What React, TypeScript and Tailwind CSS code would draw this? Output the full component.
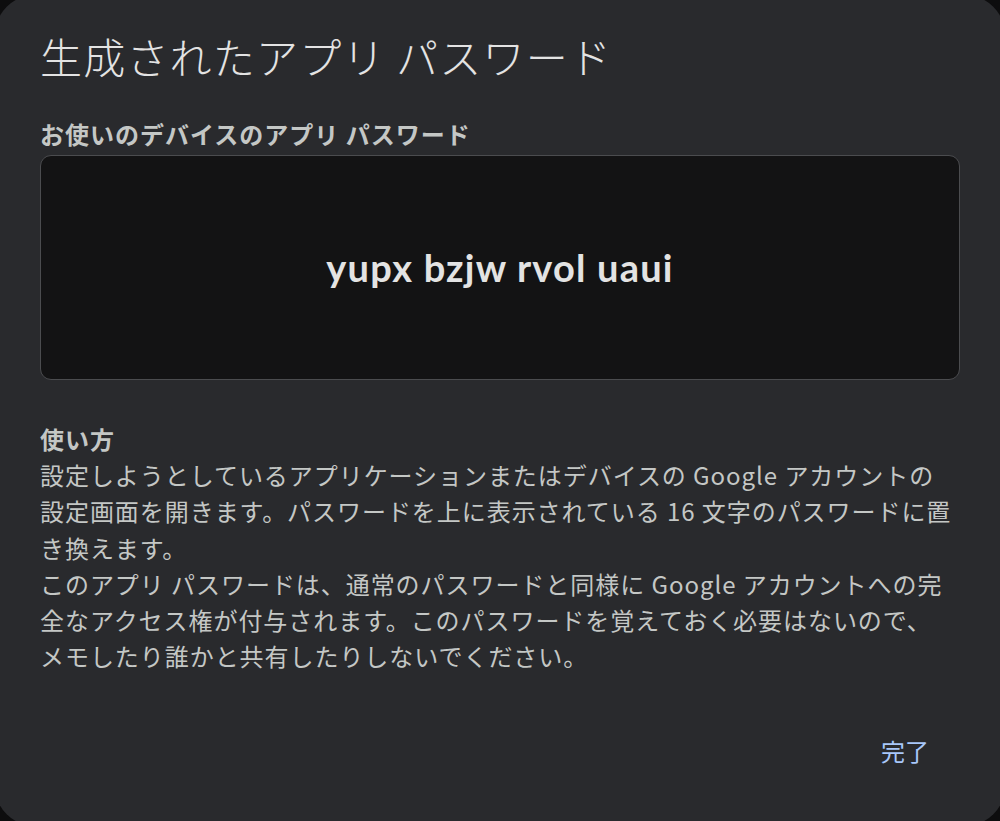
const jp = { fontFamily: '"Noto Sans CJK JP", "Noto Sans", sans-serif' };

const App = () => {
  return (
    <div className="w-[1000px] h-[821px] overflow-hidden bg-[#0d0d0e]">
      {/* dialog is a bit bigger than the window, so only part of its corners shows */}
      <div
        className="-m-[5px] w-[1010px] h-[831px] rounded-[40px] bg-[#292a2d] flex flex-col pl-[45px] pr-[45px] pt-[29px] text-[#c4c7c5]"
        style={jp}
      >
        <h1 className="text-[42px] leading-[64px] font-light text-[#e3e3e3] tracking-[1.2px]">
          生成されたアプリ パスワード
        </h1>

        <h2 className="mt-[28px] text-[24px] leading-[36px] font-bold tracking-[1px]">
          お使いのデバイスのアプリ パスワード
        </h2>

        <div className="mt-[3px] h-[225px] rounded-[11px] border border-[#4b4c4f] bg-[#131314] flex items-center justify-center">
          <span
            className="text-[38px] font-bold text-[#e3e3e3] tracking-[1.2px]"
            style={{ fontFamily: 'Lato, "Open Sans", sans-serif' }}
          >
            yupx bzjw rvol uaui
          </span>
        </div>

        <div className="mt-[41px] text-[24px] leading-[36.2px] tracking-[0.95px]">
          <h3 className="font-bold">使い方</h3>
          <p className="whitespace-nowrap">
            設定しようとしているアプリケーションまたはデバイスの Google アカウントの
            <br />
            設定画面を開きます。パスワードを上に表示されている 16 文字のパスワードに置
            <br />
            き換えます。
          </p>
          <p className="whitespace-nowrap">
            このアプリ パスワードは、通常のパスワードと同様に Google アカウントへの完
            <br />
            全なアクセス権が付与されます。このパスワードを覚えておく必要はないので、
            <br />
            メモしたり誰かと共有したりしないでください。
          </p>
        </div>

        <div className="mt-auto mb-[57px] flex justify-end">
          <button className="mr-[31px] text-[24px] leading-[36px] text-[#a8c7fa]">完了</button>
        </div>
      </div>
    </div>
  );
};

export default App;
